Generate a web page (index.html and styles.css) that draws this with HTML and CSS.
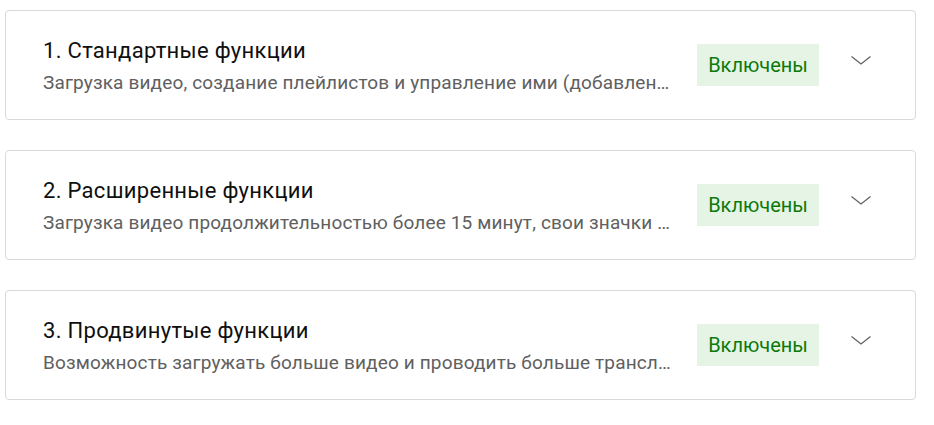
FILE: index.html
```html
<!DOCTYPE html>
<html lang="ru">
<head>
<meta charset="utf-8">
<link rel="stylesheet" href="styles.css">
</head>
<body>
<div class="list">
  <div class="card">
    <div class="info">
      <div class="title">1. Стандартные функции</div>
      <div class="desc">Загрузка видео, создание плейлистов и управление ими (добавление видео в плейлисты, изменение порядка)</div>
    </div>
    <div class="badge">Включены</div>
    <button class="toggle" aria-label="Развернуть"><svg width="24" height="24" viewBox="0 0 24 24"><polyline points="2.5,8.5 12,16 21.5,8.5" fill="none" stroke="#606060" stroke-width="1.2"/></svg></button>
  </div>
  <div class="card">
    <div class="info">
      <div class="title">2. Расширенные функции</div>
      <div class="desc">Загрузка видео продолжительностью более 15 минут, свои значки для видео, прямые трансляции</div>
    </div>
    <div class="badge">Включены</div>
    <button class="toggle" aria-label="Развернуть"><svg width="24" height="24" viewBox="0 0 24 24"><polyline points="2.5,8.5 12,16 21.5,8.5" fill="none" stroke="#606060" stroke-width="1.2"/></svg></button>
  </div>
  <div class="card">
    <div class="info">
      <div class="title">3. Продвинутые функции</div>
      <div class="desc">Возможность загружать больше видео и проводить больше трансляций в день</div>
    </div>
    <div class="badge">Включены</div>
    <button class="toggle" aria-label="Развернуть"><svg width="24" height="24" viewBox="0 0 24 24"><polyline points="2.5,8.5 12,16 21.5,8.5" fill="none" stroke="#606060" stroke-width="1.2"/></svg></button>
  </div>
</div>
</body>
</html>
```

FILE: styles.css
```css
html, body {
  margin: 0;
  padding: 0;
  background: #ffffff;
}
body {
  font-family: Roboto, "Noto Sans", Arial, sans-serif;
  padding: 10px 0 0 5px;
}
.list {
  width: 911px;
  display: flex;
  flex-direction: column;
  gap: 30px;
}
.card {
  box-sizing: border-box;
  height: 110px;
  border: 1px solid #d9d9d9;
  border-radius: 4px;
  display: flex;
  align-items: center;
  padding: 0 34px 0 37px;
}
.info {
  flex: 1;
  min-width: 0;
  padding-top: 1px;
}
.title {
  font-size: 22px;
  line-height: 28px;
  letter-spacing: 0.3px;
  color: #0f0f0f;
  margin-bottom: 6px;
}
.desc {
  font-size: 19px;
  line-height: 24px;
  letter-spacing: 0.15px;
  color: #606060;
  white-space: nowrap;
  overflow: hidden;
  text-overflow: ellipsis;
}
.badge {
  margin-left: 22px;
  width: 122px;
  height: 42px;
  flex: none;
  box-sizing: border-box;
  display: flex;
  align-items: center;
  justify-content: center;
  background: #e6f4e6;
  color: #0b7a0b;
  font-size: 20px;
  font-weight: 400;
}
.toggle {
  flex: none;
  margin-left: 22px;
  width: 40px;
  height: 40px;
  padding: 0;
  border: none;
  background: none;
  display: flex;
  align-items: center;
  justify-content: center;
  margin-top: -10px;
}
.toggle svg {
  display: block;
}
```
